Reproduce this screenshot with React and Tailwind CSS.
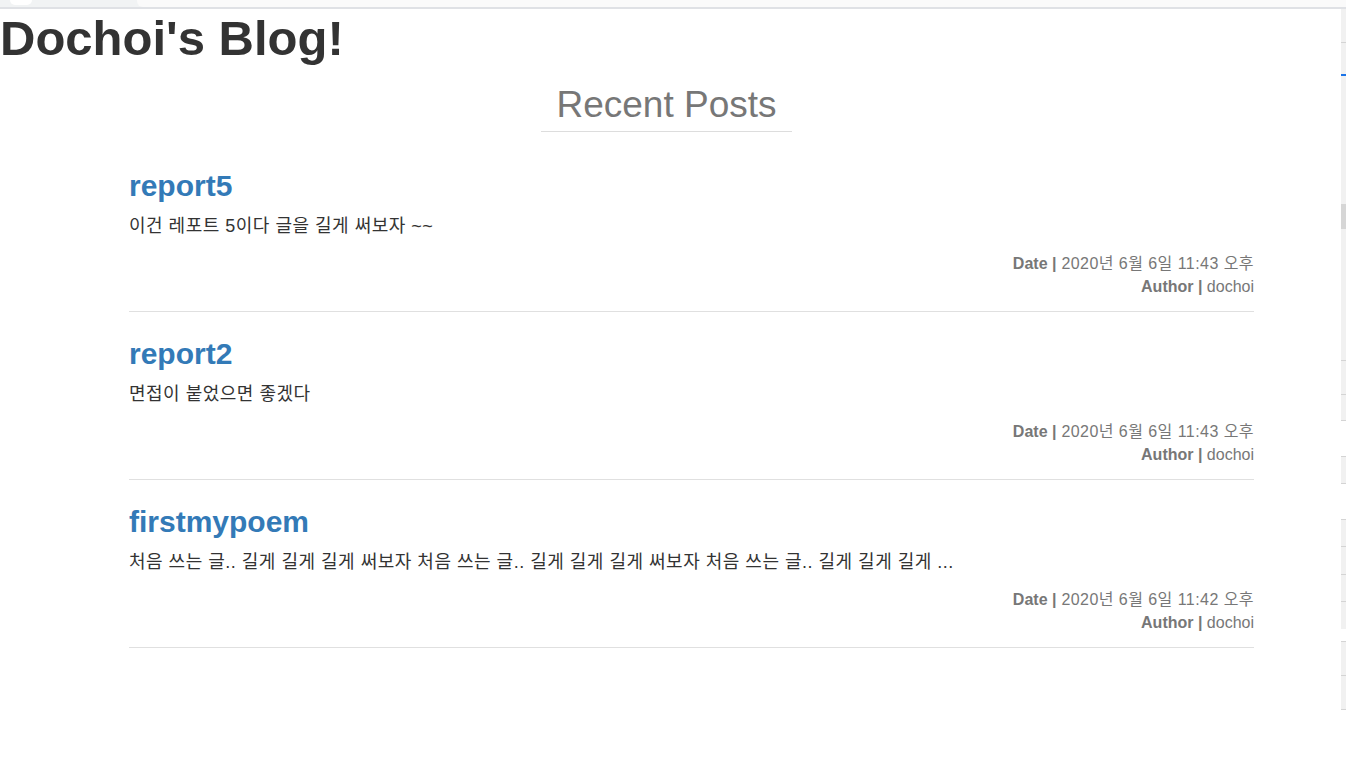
import React from "react";

const posts = [
  {
    title: "report5",
    excerpt: "이건 레포트 5이다 글을 길게 써보자 ~~",
    date: "2020년 6월 6일 11:43 오후",
  },
  {
    title: "report2",
    excerpt: "면접이 붙었으면 좋겠다",
    date: "2020년 6월 6일 11:43 오후",
  },
  {
    title: "firstmypoem",
    excerpt:
      "처음 쓰는 글.. 길게 길게 길게 써보자 처음 쓰는 글.. 길게 길게 길게 써보자 처음 쓰는 글.. 길게 길게 길게 ...",
    date: "2020년 6월 6일 11:42 오후",
  },
];

const font = { fontFamily: '"Liberation Sans", Arial, "Noto Sans CJK KR", sans-serif' };

function Strip() {
  const g = "bg-[#f1f1f1]";
  const l = "h-px bg-[#d4d4d4]";
  return (
    <div className="w-[5px] flex flex-col">
      <div className={`h-[33px] ${g}`} />
      <div className={l} />
      <div className={`h-[31px] ${g}`} />
      <div className="h-[2px] bg-[#1a73e8]" />
      <div className={`h-[128px] ${g}`} />
      <div className="h-[25px] bg-[#d6d6d6]" />
      <div className={`h-[131px] ${g}`} />
      <div className={l} />
      <div className={`h-[33px] ${g}`} />
      <div className={l} />
      <div className={`h-[25px] ${g}`} />
      <div className={l} />
      <div className="h-[35px] bg-white" />
      <div className={l} />
      <div className={`h-[26px] ${g}`} />
      <div className={l} />
      <div className="h-[35px] bg-white" />
      <div className={l} />
      <div className={`h-[26px] ${g}`} />
      <div className={l} />
      <div className={`h-[27px] ${g}`} />
      <div className={l} />
      <div className={`h-[26px] ${g}`} />
      <div className={l} />
      <div className={`h-[27px] ${g}`} />
      <div className="h-[12px] bg-white" />
      <div className={l} />
      <div className={`h-[33px] ${g}`} />
      <div className={l} />
      <div className={`h-[33px] ${g}`} />
      <div className={l} />
    </div>
  );
}

export default function App() {
  return (
    <div className="w-[1346px] h-[771px] bg-white flex flex-col overflow-hidden" style={font}>
      <div className="h-[7px] bg-[#f1f3f4] flex">
        <div className="w-[10px]" />
        <div className="w-[22px] h-[5px] bg-white rounded-b-full" />
        <div className="w-[105px]" />
        <div className="flex-1 bg-[#fafafa] rounded-bl-[6px]" />
      </div>
      <div className="h-[2px] bg-[#dfe1e5]" />
      <div className="flex flex-1">
        <main className="flex-1 flex flex-col">
          <h1 className="mt-[2px] text-[49px] leading-[55px] font-bold text-[#333333]">
            Dochoi's Blog!
          </h1>
          <div className="mt-[19px] w-[1333px] flex justify-center">
            <h3 className="px-[15px] pb-[6px] border-b border-[#dddddd] text-[37px] leading-[40px] text-[#777777]">
              Recent Posts
            </h3>
          </div>
          <div className="ml-[129px] w-[1125px] mt-[12px] flex flex-col">
            {posts.map((p) => (
              <div key={p.title} className="pt-[25px] pb-[13px] border-b border-[#e0e0e0]">
                <h2 className="text-[30px] leading-[33px] font-bold text-[#337ab7]">{p.title}</h2>
                <p className="mt-[12px] text-[18px] leading-[24px] tracking-[0.5px] text-[#333333]">
                  {p.excerpt}
                </p>
                <div className="mt-[14px] flex flex-col items-end text-[16px] leading-[23px] text-[#777777]">
                  <div>
                    <span className="font-bold">Date |</span>
                    <span className="tracking-[0.45px]"> {p.date}</span>
                  </div>
                  <div>
                    <span className="font-bold">Author |</span> dochoi
                  </div>
                </div>
              </div>
            ))}
          </div>
        </main>
        <Strip />
      </div>
    </div>
  );
}
